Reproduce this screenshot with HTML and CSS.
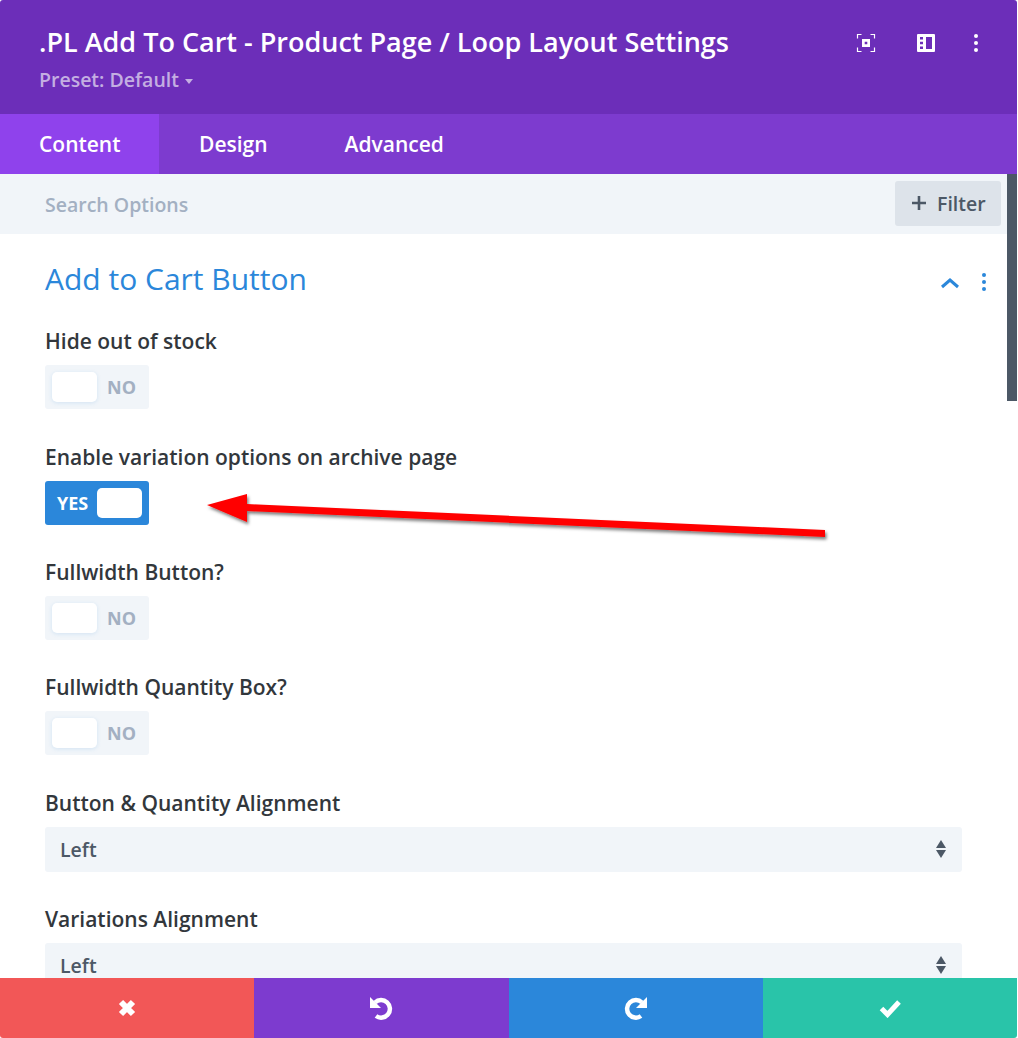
FILE: index.html
```html
<!DOCTYPE html>
<html lang="en">
<head>
    <meta charset="UTF-8">
    <title>Layout Settings</title>
    <link rel="stylesheet" href="styles.css">
</head>
<body>
    <div class="modal">
        <div class="header">
            <div class="header-text">
                <h1>.PL Add To Cart - Product Page / Loop Layout Settings</h1>
                <div class="preset">Preset: Default <span class="caret"></span></div>
            </div>
            <div class="header-icons">
                <svg width="20" height="20" viewBox="0 0 20 20">
                    <path d="M1.500 5.500v-4h4M14.500 1.500h4v4M18.500 14.500v4h-4M5.500 18.500h-4v-4" fill="none" stroke="#fff" stroke-width="1.200"/>
                    <path fill-rule="evenodd" d="M6 6h8v8H6zM8.700 8.700v2.600h2.600V8.700z" fill="#fff"/>
                </svg>
                <svg width="20" height="20" viewBox="0 0 20 20">
                    <path fill-rule="evenodd" d="M2 1h16a1 1 0 0 1 1 1v16a1 1 0 0 1-1 1H2a1 1 0 0 1-1-1V2a1 1 0 0 1 1-1zM4 4v2.500h3V4zM4 8.700v2.600h3V8.700zM4 13.500V16h3v-2.500zM10 4v12h6V4z" fill="#fff"/>
                </svg>
                <svg class="more" width="20" height="20" viewBox="0 0 20 20">
                    <circle cx="10" cy="3" r="2" fill="#fff"/>
                    <circle cx="10" cy="10" r="2" fill="#fff"/>
                    <circle cx="10" cy="17" r="2" fill="#fff"/>
                </svg>
            </div>
        </div>
        <div class="tabs">
            <div class="tab active">Content</div>
            <div class="tab design">Design</div>
            <div class="tab">Advanced</div>
        </div>
        <div class="search-bar">
            <span class="search-text">Search Options</span>
            <div class="filter-btn">
                <svg width="16" height="16" viewBox="0 0 16 16"><path d="M8 1v14M1 8h14" stroke="#4c5866" stroke-width="2.600" fill="none"/></svg>
                Filter
            </div>
        </div>
        <div class="content">
            <div class="section-head">
                <h2>Add to Cart Button</h2>
                <svg class="chevron" width="20" height="12" viewBox="0 0 20 12"><path d="M2 10l8-7 8 7" stroke="#2b87da" stroke-width="3" fill="none"/></svg>
                <svg class="dots" width="6" height="20" viewBox="0 0 6 20">
                    <circle cx="3" cy="3" r="2" fill="#2b87da"/>
                    <circle cx="3" cy="10" r="2" fill="#2b87da"/>
                    <circle cx="3" cy="17" r="2" fill="#2b87da"/>
                </svg>
            </div>

            <div class="form-group tall">
                <label>Hide out of stock</label>
                <div class="toggle"><span class="knob"></span><span class="toggle-text">NO</span></div>
            </div>
            <div class="form-group">
                <label>Enable variation options on archive page</label>
                <div class="toggle on"><span class="toggle-text">YES</span><span class="knob"></span></div>
            </div>
            <div class="form-group">
                <label>Fullwidth Button?</label>
                <div class="toggle"><span class="knob"></span><span class="toggle-text">NO</span></div>
            </div>
            <div class="form-group tall">
                <label>Fullwidth Quantity Box?</label>
                <div class="toggle"><span class="knob"></span><span class="toggle-text">NO</span></div>
            </div>
            <div class="form-group tall">
                <label>Button &amp; Quantity Alignment</label>
                <div class="select">Left<span class="updown"></span></div>
            </div>
            <div class="form-group tall">
                <label>Variations Alignment</label>
                <div class="select">Left<span class="updown"></span></div>
            </div>
        </div>
        <div class="footer">
            <div class="foot-btn red">
                <svg width="20" height="20" viewBox="0 0 20 20"><path d="M4 4l12 12M16 4L4 16" stroke="#fff" stroke-width="6" fill="none"/></svg>
            </div>
            <div class="foot-btn purple">
                <svg width="24" height="24" viewBox="0 0 24 24"><path d="M6 6.500A8.800 8.800 0 1 1 7 20" stroke="#fff" stroke-width="4.500" fill="none"/><path d="M1 1v11h11z" fill="#fff"/></svg>
            </div>
            <div class="foot-btn blue">
                <svg width="24" height="24" viewBox="0 0 24 24"><path d="M18 6.500A8.800 8.800 0 1 0 17 20" stroke="#fff" stroke-width="4.500" fill="none"/><path d="M23 1v11H12z" fill="#fff"/></svg>
            </div>
            <div class="foot-btn green">
                <svg width="24" height="20" viewBox="0 0 24 20"><path d="M3.500 10.500l6 6L21 4" stroke="#fff" stroke-width="5" fill="none"/></svg>
            </div>
        </div>
        <div class="scroll-thumb"></div>
        <svg class="arrow" width="650" height="70" viewBox="0 0 650 70">
            <defs>
                <filter id="arrow-shadow" x="-5%" y="-40%" width="110%" height="200%">
                    <feDropShadow dx="1.500" dy="2.500" stdDeviation="1.500" flood-color="#000" flood-opacity="0.5"/>
                </filter>
            </defs>
            <path d="M17 25L57 14V24L635 50V57L57 31V42z" fill="#f00" filter="url(#arrow-shadow)"/>
        </svg>
    </div>
</body>
</html>
```

FILE: styles.css
```css
* {
    box-sizing: border-box;
}
html, body {
    height: 100%;
}
body {
    font-family: 'Open Sans', 'Noto Sans', sans-serif;
    margin: 0;
    padding: 0;
    background-color: #fff;
    overflow: hidden;
}
.modal {
    position: relative;
    width: 1017px;
    height: 1038px;
    display: flex;
    flex-direction: column;
    border-radius: 3px;
    overflow: hidden;
}
.header {
    height: 114px;
    flex: none;
    background-color: #6c2eb9;
    display: flex;
    justify-content: space-between;
    padding: 24px 31px 0 39px;
}
.header h1 {
    margin: 0;
    font-size: 27px;
    line-height: 36px;
    font-weight: 600;
    color: #fff;
}
.preset {
    margin-top: 7px;
    font-size: 19.500px;
    line-height: 26px;
    font-weight: 600;
    color: #c4aee2;
}
.caret {
    display: inline-block;
    margin-left: 1px;
    vertical-align: 3px;
    border-left: 4px solid transparent;
    border-right: 4px solid transparent;
    border-top: 5px solid #c4aee2;
}
.header-icons {
    display: flex;
    gap: 40px;
    padding-top: 9px;
}
.header-icons .more {
    margin-left: -10px;
}
.tabs {
    height: 60px;
    flex: none;
    background-color: #7d3bcf;
    display: flex;
}
.tab {
    padding: 0 39px;
    font-size: 21px;
    line-height: 60px;
    font-weight: 600;
    color: #fff;
}
.tab.active {
    width: 159px;
    padding-right: 0;
    background-color: #8f42ec;
}
.tab.design {
    padding-left: 40px;
    padding-right: 38px;
}
.search-bar {
    height: 60px;
    flex: none;
    background-color: #f1f5f9;
    display: flex;
    justify-content: space-between;
    align-items: center;
    padding: 0 16px 0 45px;
}
.search-text {
    font-size: 19.500px;
    font-weight: 600;
    color: #a3b0c2;
}
.filter-btn {
    width: 106px;
    height: 45px;
    margin-top: -2px;
    display: flex;
    align-items: center;
    gap: 10px;
    padding-left: 16px;
    background-color: #dde3ea;
    border-radius: 3px;
    font-size: 19.500px;
    font-weight: 600;
    color: #4c5866;
}
.content {
    position: relative;
    flex: 1;
    min-height: 0;
    padding: 0 55px 0 45px;
    background-color: #fff;
    overflow: hidden;
}
.scroll-thumb {
    position: absolute;
    top: 174px;
    right: 0;
    width: 10px;
    height: 227px;
    background-color: #4c5866;
}
.section-head {
    position: relative;
    height: 95px;
    padding-top: 24px;
}
.section-head h2 {
    margin: 0;
    font-size: 30px;
    line-height: 42px;
    font-weight: 400;
    color: #2b87da;
}
.chevron {
    position: absolute;
    right: 2px;
    top: 43px;
}
.dots {
    position: absolute;
    right: -25px;
    top: 38px;
}
.form-group {
    height: 115px;
}
.form-group.tall {
    height: 116px;
}
.form-group label {
    display: block;
    height: 36px;
    font-size: 21px;
    line-height: 24px;
    font-weight: 600;
    color: #32373c;
}
.toggle {
    width: 104px;
    height: 44px;
    display: flex;
    align-items: center;
    padding: 0 7px;
    border-radius: 3px;
    background-color: #f1f5f9;
}
.knob {
    width: 45px;
    height: 30px;
    border-radius: 5px;
    background-color: #fff;
    box-shadow: 0 1px 4px rgba(43, 135, 218, 0.15);
}
.toggle-text {
    margin-left: 10px;
    font-size: 18px;
    font-weight: 700;
    color: #a3b0c2;
}
.toggle.on {
    background-color: #2b87da;
}
.toggle.on .toggle-text {
    margin: 0 9px 0 5px;
    color: #fff;
}
.select {
    position: relative;
    height: 45px;
    padding: 0 15px;
    border-radius: 3px;
    background-color: #f1f5f9;
    font-size: 19.500px;
    line-height: 45px;
    font-weight: 600;
    color: #4c5866;
}
.updown {
    position: absolute;
    right: 16px;
    top: 13px;
    width: 10px;
    height: 18px;
}
.updown::before, .updown::after {
    content: "";
    position: absolute;
    left: 0;
    border-left: 5px solid transparent;
    border-right: 5px solid transparent;
}
.updown::before {
    top: 0;
    border-bottom: 8px solid #4c5866;
}
.updown::after {
    bottom: 0;
    border-top: 8px solid #4c5866;
}
.footer {
    position: absolute;
    left: 0;
    right: 0;
    bottom: 0;
    height: 60px;
    display: flex;
}
.foot-btn {
    flex: 1;
    display: flex;
    justify-content: center;
    align-items: center;
}
.red {
    background-color: #f25757;
}
.purple {
    background-color: #7d3bcf;
}
.blue {
    background-color: #2b87da;
}
.green {
    background-color: #29c4a9;
}
.arrow {
    position: absolute;
    left: 190px;
    top: 480px;
}
```
